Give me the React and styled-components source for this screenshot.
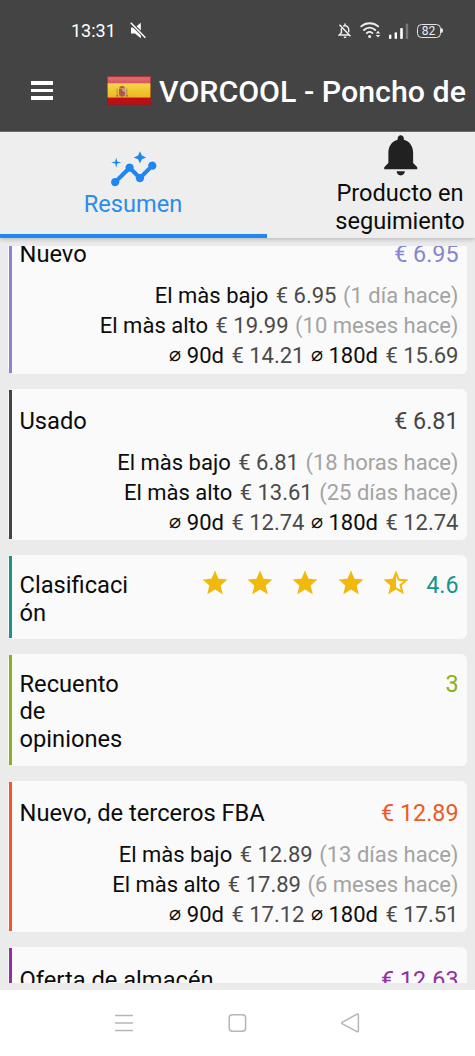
import styled, { createGlobalStyle } from "styled-components";

const cards = [
  {
    title: "Nuevo",
    price: "€ 6.95",
    color: "#8884d0",
    low: ["€ 6.95", "(1 día hace)"],
    high: ["€ 19.99", "(10 meses hace)"],
    avg: ["€ 14.21", "€ 15.69"],
  },
  {
    title: "Usado",
    price: "€ 6.81",
    color: "#444444",
    low: ["€ 6.81", "(18 horas hace)"],
    high: ["€ 13.61", "(25 días hace)"],
    avg: ["€ 12.74", "€ 12.74"],
  },
  { title: "Clasificación", price: "4.6", color: "#17958a", stars: 4.5 },
  { title: "Recuento de opiniones", price: "3", color: "#8bb01c" },
  {
    title: "Nuevo, de terceros FBA",
    price: "€ 12.89",
    color: "#ed5a28",
    low: ["€ 12.89", "(13 días hace)"],
    high: ["€ 17.89", "(6 meses hace)"],
    avg: ["€ 17.12", "€ 17.51"],
  },
  { title: "Oferta de almacén", price: "€ 12.63", color: "#9230a3", wide: true },
];

export default function App() {
  return (
    <Screen>
      <GlobalStyle />
      <StatusBar />
      <Header>
        <MenuButton>
          <span />
          <span />
          <span />
        </MenuButton>
        <SpainFlag />
        <HeaderTitle>VORCOOL - Poncho de</HeaderTitle>
      </Header>
      <Tabs>
        <Tab $active>
          <InsightsIcon />
          <TabLabel $active>Resumen</TabLabel>
        </Tab>
        <Tab>
          <BellIcon />
          <TabLabel>
            Producto en
            <br />
            seguimiento
          </TabLabel>
        </Tab>
      </Tabs>
      <ScrollArea>
        <CardList>
          {cards.map((card) => {
            return <PriceCard key={card.title} card={card} />;
          })}
        </CardList>
      </ScrollArea>
      <NavBar />
    </Screen>
  );
}

function PriceCard({ card }) {
  const detailed = Boolean(card.low || card.wide);
  return (
    <Card $detailed={detailed}>
      <Stripe $color={card.color} />
      <CardBody $detailed={detailed}>
        <CardTop>
          <CardTitle $narrow={!detailed}>{card.title}</CardTitle>
          {card.stars && <Rating value={card.stars} />}
          <Price $color={card.color}>{card.price}</Price>
        </CardTop>
        {card.low && (
          <Details>
            <Line>
              El màs bajo <Value>{card.low[0]}</Value> <Ago>{card.low[1]}</Ago>
            </Line>
            <Line>
              El màs alto <Value>{card.high[0]}</Value>{" "}
              <Ago>{card.high[1]}</Ago>
            </Line>
            <Line>
              <Avg>⌀</Avg> 90d <Value>{card.avg[0]}</Value> <Avg>⌀</Avg> 180d{" "}
              <Value>{card.avg[1]}</Value>
            </Line>
          </Details>
        )}
      </CardBody>
    </Card>
  );
}

function Rating({ value }) {
  return (
    <Stars>
      {[1, 2, 3, 4, 5].map((n) => (
        <svg key={n} width="30" height="30" viewBox="0 0 24 24" fill="#f1b90c">
          {n <= value ? (
            <path d="M12 17.27 18.18 21l-1.64-7.03L22 9.24l-7.19-.61L12 2 9.19 8.63 2 9.24l5.46 4.73L5.82 21z" />
          ) : (
            <path d="m22 9.24-7.19-.62L12 2 9.19 8.63 2 9.24l5.46 4.73L5.82 21 12 17.27 18.18 21l-1.63-7.03zM12 15.4V6.1l1.71 4.04 4.38.38-3.32 2.88 1 4.28z" />
          )}
        </svg>
      ))}
    </Stars>
  );
}

function InsightsIcon() {
  return (
    <TabIcon viewBox="0 0 24 24" fill="#1e88f0">
      <path d="M21 8c-1.45 0-2.26 1.44-1.93 2.51l-3.55 3.56c-.3-.09-.74-.09-1.04 0l-2.55-2.55C12.27 10.45 11.46 9 10 9c-1.45 0-2.27 1.44-1.93 2.52l-4.56 4.55C2.44 15.74 1 16.55 1 18c0 1.1.9 2 2 2 1.45 0 2.26-1.44 1.93-2.51l4.55-4.56c.3.09.74.09 1.04 0l2.55 2.55C12.73 16.55 13.54 18 15 18c1.45 0 2.27-1.44 1.93-2.52l3.56-3.55C21.56 12.26 23 11.45 23 10c0-1.1-.9-2-2-2z" />
      <path d="m15 9 .94-2.07L18 6l-2.06-.93L15 3l-.92 2.07L12 6l2.08.93zM3.5 11 4 9l2-.5L4 8l-.5-2L3 8l-2 .5L3 9z" />
    </TabIcon>
  );
}

function BellIcon() {
  return (
    <TabIcon viewBox="0 0 24 24" fill="#212121">
      <path d="M12 22c1.1 0 2-.9 2-2h-4c0 1.1.89 2 2 2zm6-6v-5c0-3.07-1.64-5.64-4.5-6.32V4c0-.83-.67-1.5-1.5-1.5s-1.5.67-1.5 1.5v.68C7.63 5.36 6 7.92 6 11v5l-2 2v1h16v-1l-2-2z" />
    </TabIcon>
  );
}

function SpainFlag() {
  return (
    <Flag viewBox="0 0 44 29">
      <defs>
        <linearGradient id="flagTop" x1="0" y1="0" x2="0" y2="1">
          <stop offset="0" stopColor="#c9525c" />
          <stop offset="0.25" stopColor="#e06a70" />
          <stop offset="1" stopColor="#d6525a" />
        </linearGradient>
        <linearGradient id="flagMid" x1="0" y1="0" x2="0" y2="1">
          <stop offset="0" stopColor="#f6d64a" />
          <stop offset="1" stopColor="#e9b91c" />
        </linearGradient>
        <linearGradient id="flagLow" x1="0" y1="0" x2="0" y2="1">
          <stop offset="0" stopColor="#c80a12" />
          <stop offset="1" stopColor="#b0141a" />
        </linearGradient>
      </defs>
      <rect width="44" height="8" fill="url(#flagTop)" />
      <rect y="7.3" width="44" height="14.5" fill="url(#flagMid)" />
      <rect y="21.7" width="44" height="7.3" fill="url(#flagLow)" />
      <path d="M9.6 12.5h1.3v7H9.6zM19.2 12.5h1.3v7h-1.3z" fill="#b59a6a" />
      <path d="M9 19.3h2.6v1.2H9zM18.6 19.3h2.6v1.2h-2.6z" fill="#9a6a50" />
      <path d="M12 12.4h6.2v5.2a3.1 3.1 0 0 1-6.2 0z" fill="#b8554a" />
      <path d="M15.1 12.4h3.1v3.4h-3.1z" fill="#c9a08a" />
      <circle cx="15.1" cy="16" r="1.1" fill="#6a5a7a" />
      <path d="M12.4 11.9c0-2.4 5.4-2.4 5.4 0z" fill="#b5603a" />
      <rect
        x="0.5"
        y="0.5"
        width="43"
        height="28"
        fill="none"
        stroke="#7c2020"
        strokeOpacity="0.55"
      />
    </Flag>
  );
}

function StatusBar() {
  return (
    <Status>
      <Clock>13:31</Clock>
      <svg width="17" height="17" viewBox="0 0 17 17">
        <path d="M1 5.5h4L10.8.8v15.4L5 11.5H1z" fill="#fff" />
        <path d="M0 0 16 16" stroke="#444" strokeWidth="3.4" />
        <path d="m.8.8 14.6 14.9" stroke="#fff" strokeWidth="1.5" />
      </svg>
      <StatusIcons>
        <svg
          width="14"
          height="16"
          viewBox="0 0 14 16"
          fill="none"
          stroke="#eee"
          strokeWidth="1.5"
        >
          <path d="M5 3.2C8.3 1.6 10.7 4 10.7 6.5v2.8M3.4 5.2v4.6L1.2 12h9.6M7 .5v2M5.8 14.3h2.4M1.5 1.8l11 11.4" />
        </svg>
        <svg
          width="21"
          height="17"
          viewBox="0 0 21 17"
          fill="none"
          stroke="#eee"
          strokeWidth="1.8"
          strokeLinecap="round"
        >
          <path d="M1.2 4.4c4.8-4.2 12.2-4.2 17 0M4 8c3.3-3.2 8-3.2 11.2 0M6.8 11.1c1.8-1.5 3.8-1.5 5.6 0" />
          <circle cx="9.6" cy="14.6" r="1.5" fill="#eee" stroke="none" />
          <path
            d="M15.8 11.4 18 8.8l2.2 2.6zM15.8 13 18 15.6l2.2-2.6z"
            fill="#eee"
            stroke="none"
          />
        </svg>
        <svg width="20" height="16" viewBox="0 0 20 16" fill="#fff">
          <rect x="0" y="11.5" width="2.4" height="4.5" rx="1" />
          <rect x="5.6" y="9.2" width="2.4" height="6.8" rx="1" />
          <rect x="11.2" y="5" width="2.6" height="11" rx="1" />
          <rect x="16.8" y="0.5" width="2.4" height="15.5" rx="1" fill="#777" />
        </svg>
        <Battery>82</Battery>
      </StatusIcons>
    </Status>
  );
}

function NavBar() {
  return (
    <Nav>
      <svg width="20" height="20" viewBox="0 0 20 20">
        <path
          d="M1 2.5h18M1 10h18M1 17.5h18"
          stroke="#b5b5b5"
          strokeWidth="1.5"
        />
      </svg>
      <svg width="20" height="20" viewBox="0 0 20 20" fill="none">
        <rect
          x="2.2"
          y="1.8"
          width="16.4"
          height="16.4"
          rx="3.2"
          stroke="#b5b5b5"
          strokeWidth="1.5"
        />
      </svg>
      <svg width="20" height="20" viewBox="0 0 20 20" fill="none">
        <path
          d="M18.4 2v16a.9.9 0 0 1-1.4.7L2 10.6a.8.8 0 0 1 0-1.3L17 1.2a.9.9 0 0 1 1.4.8z"
          stroke="#b5b5b5"
          strokeWidth="1.5"
        />
      </svg>
    </Nav>
  );
}

const GlobalStyle = createGlobalStyle`
  * {
    box-sizing: border-box;
  }
  body {
    margin: 0;
    font-family: Roboto, "Noto Sans", sans-serif;
    background-color: #ebebeb;
  }
  svg {
    display: block;
    flex-shrink: 0;
  }
`;

const Screen = styled.div`
  width: 475px;
  height: 1056px;
  display: flex;
  flex-direction: column;
  overflow: hidden;
  background-color: #ebebeb;
`;

const Status = styled.div`
  height: 60px;
  flex-shrink: 0;
  display: flex;
  align-items: center;
  padding: 1px 34.5px 0 71px;
  color: #fff;
  background-color: #444;
`;

const Clock = styled.div`
  width: 59px;
  font-size: 18px;
`;

const StatusIcons = styled.div`
  margin-left: auto;
  display: flex;
  align-items: center;
  gap: 8px;
`;

const Battery = styled.div`
  position: relative;
  width: 24px;
  height: 14px;
  border: 1.5px solid #e4e4e4;
  border-radius: 4.5px;
  color: #eee;
  font-size: 12px;
  line-height: 12px;
  text-align: center;
  &::after {
    content: "";
    position: absolute;
    top: 3px;
    right: -3px;
    width: 2px;
    height: 5px;
    border-radius: 0 2px 2px 0;
    background-color: #e4e4e4;
  }
`;

const Header = styled.header`
  height: 72px;
  flex-shrink: 0;
  display: flex;
  align-items: center;
  padding: 0 0 11px 31px;
  background-color: #444;
  border-bottom: 1px solid #777;
`;

const MenuButton = styled.div`
  width: 22px;
  margin-right: 54px;
  padding-top: 1px;
  display: flex;
  flex-direction: column;
  gap: 4px;
  span {
    height: 3.5px;
    background-color: #fff;
  }
`;

const Flag = styled.svg`
  width: 44px;
  height: 29px;
  margin-right: 8px;
`;

const HeaderTitle = styled.div`
  padding-top: 3px;
  color: #fff;
  font-size: 30.35px;
  font-weight: 500;
  line-height: 36px;
  white-space: nowrap;
`;

const Tabs = styled.div`
  position: relative;
  z-index: 1;
  height: 106px;
  flex-shrink: 0;
  display: flex;
  background-color: #eee;
  box-shadow: 0 1px 5px rgba(0, 0, 0, 0.25);
`;

const Tab = styled.div`
  width: 267px;
  flex-shrink: 0;
  display: flex;
  flex-direction: column;
  align-items: center;
  padding-top: ${(props) => (props.$active ? "13px" : "0")};
  margin-top: ${(props) => (props.$active ? "0" : "-2px")};
  color: ${(props) => (props.$active ? "#2b8ceb" : "#0c0c0c")};
  border-bottom: 4px solid
    ${(props) => (props.$active ? "#1e88f0" : "transparent")};
`;

const TabIcon = styled.svg`
  width: 49.5px;
  height: 49.5px;
`;

const TabLabel = styled.div`
  margin-top: ${(props) => (props.$active ? "-4.5px" : "-0.5px")};
  padding-right: 1px;
  font-size: 23.6px;
  line-height: 28px;
  text-align: center;
`;

const ScrollArea = styled.div`
  height: 737px;
  margin-top: 8px;
  flex-shrink: 0;
  overflow: hidden;
`;

const CardList = styled.div`
  display: flex;
  flex-direction: column;
  gap: 15.2px;
  margin-top: -24px;
  padding: 0 8px;
`;

const Card = styled.div`
  flex-shrink: 0;
  display: flex;
  padding: 1px 0 1px 1px;
  border-radius: 6px;
  background-color: #fafafa;
  min-height: ${(props) => (props.$detailed ? "151.5px" : "0")};
`;

const Stripe = styled.div`
  width: 3px;
  flex-shrink: 0;
  background-color: ${(props) => props.$color};
`;

const CardBody = styled.div`
  flex: 1;
  padding: ${(props) =>
    props.$detailed ? "18.2px 8.5px 0 7.5px" : "15.5px 8.5px 10.5px 7.5px"};
`;

const CardTop = styled.div`
  display: flex;
  align-items: flex-start;
  font-size: 23.3px;
  line-height: 27.8px;
`;

const CardTitle = styled.div`
  width: ${(props) => (props.$narrow ? "114px" : "auto")};
  color: #0c0c0c;
  font-size: 23.7px;
  word-break: break-word;
`;

const Price = styled.div`
  margin-left: auto;
  color: ${(props) => props.$color};
`;

const Stars = styled.div`
  display: flex;
  gap: 15.3px;
  margin: -3.5px 0 0 66.3px;
`;

const Details = styled.div`
  margin-top: 12.5px;
  color: #0c0c0c;
  font-size: 22px;
  line-height: 30px;
  text-align: right;
`;

const Line = styled.div`
  height: 30px;
  white-space: nowrap;
`;

const Value = styled.span`
  margin-left: 2px;
  color: #4a4a4a;
`;

const Ago = styled.span`
  margin-left: 1px;
  color: #a3a3a3;
`;

const Avg = styled.span`
  margin-left: 1px;
  font-size: 20px;
  line-height: 1;
  vertical-align: 2px;
`;

const Nav = styled.nav`
  height: 66px;
  margin-top: 7px;
  flex-shrink: 0;
  display: flex;
  justify-content: center;
  gap: 93px;
  padding: 23px 1px 0 0;
  background-color: #fff;
`;
